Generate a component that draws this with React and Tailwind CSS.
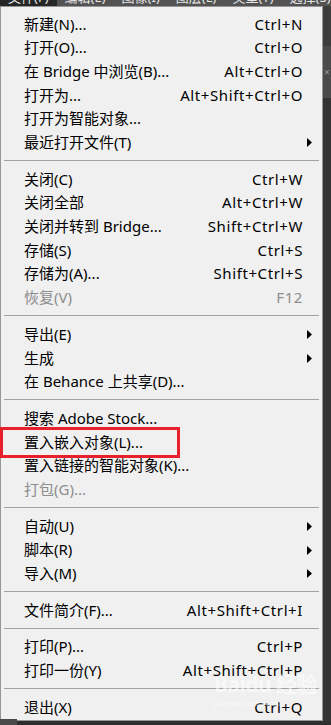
import React from 'react';

const groups = [
    [
        { label: '新建(N)...', key: 'Ctrl+N' },
        { label: '打开(O)...', key: 'Ctrl+O' },
        { label: '在 Bridge 中浏览(B)...', key: 'Alt+Ctrl+O' },
        { label: '打开为...', key: 'Alt+Shift+Ctrl+O' },
        { label: '打开为智能对象...' },
        { label: '最近打开文件(T)', sub: true },
    ],
    [
        { label: '关闭(C)', key: 'Ctrl+W' },
        { label: '关闭全部', key: 'Alt+Ctrl+W' },
        { label: '关闭并转到 Bridge...', key: 'Shift+Ctrl+W' },
        { label: '存储(S)', key: 'Ctrl+S' },
        { label: '存储为(A)...', key: 'Shift+Ctrl+S' },
        { label: '恢复(V)', key: 'F12', disabled: true },
    ],
    [
        { label: '导出(E)', sub: true },
        { label: '生成', sub: true },
        { label: '在 Behance 上共享(D)...' },
    ],
    [
        { label: '搜索 Adobe Stock...' },
        { label: '置入嵌入对象(L)...', marked: true },
        { label: '置入链接的智能对象(K)...' },
        { label: '打包(G)...', disabled: true },
    ],
    [
        { label: '自动(U)', sub: true },
        { label: '脚本(R)', sub: true },
        { label: '导入(M)', sub: true },
    ],
    [{ label: '文件简介(F)...', key: 'Alt+Shift+Ctrl+I' }],
    [
        { label: '打印(P)...', key: 'Ctrl+P' },
        { label: '打印一份(Y)', key: 'Alt+Shift+Ctrl+P' },
    ],
    [{ label: '退出(X)', key: 'Ctrl+Q' }],
];

const menuBar = ['文件(F)', '编辑(E)', '图像(I)', '图层(L)', '类型(Y)', '选择(S)'];

function Arrow() {
    return (
        <svg width="5" height="9" viewBox="0 0 5 9" className="block">
            <path d="M0 0 L5 4.5 L0 9 Z" fill="#000" />
        </svg>
    );
}

function Row({ item }) {
    const color = item.disabled ? 'text-[#8d8d8d]' : 'text-[#000]';
    return (
        <div className={`relative h-[23.7px] flex items-center pl-[23px] pr-[19px] ${color}`}>
            <span className="flex-1 whitespace-nowrap">{item.label}</span>
            {item.key && <span className="whitespace-nowrap tracking-[0.6px]">{item.key}</span>}
            {item.sub && (
                <span className="absolute right-[10px] top-[8px]">
                    <Arrow />
                </span>
            )}
            {/* red annotation box */}
            {item.marked && (
                <div className="absolute left-[-1px] top-[-3px] w-[180px] h-[31px] border-[3px] border-[#e8202b]" />
            )}
        </div>
    );
}

export default function App() {
    return (
        <div className="w-[331px] h-[725px] overflow-hidden bg-[#2e2e2e] relative font-['Noto_Sans','Noto_Sans_CJK_SC',sans-serif] text-[15px]">
            {/* menu bar, cut off at the top */}
            <div className="h-[6px] bg-[#535353] flex overflow-hidden text-[13px] text-[#e6e6e6]">
                {menuBar.map((m, i) => (
                    <div
                        key={m}
                        className={`px-[8px] leading-[18px] mt-[-12px] whitespace-nowrap ${i === 0 ? 'bg-[#262626]' : ''}`}
                    >
                        {m}
                    </div>
                ))}
            </div>

            <div className="flex">
                {/* dropdown */}
                <div className="w-[323px] bg-[#f0f0f0] border border-[#979797] pt-[5px] pb-[1px]">
                    {groups.map((g, gi) => (
                        <div key={gi}>
                            {gi > 0 && (
                                <div className="h-[13px] flex items-center px-[3px]">
                                    <div className="h-px w-full bg-[#a0a0a0]" />
                                </div>
                            )}
                            {g.map((item) => (
                                <Row key={item.label} item={item} />
                            ))}
                        </div>
                    ))}
                </div>

                {/* panel behind the menu */}
                <div className="flex-1 flex flex-col">
                    <div className="h-[40px] bg-[#3c3c3c]" />
                    <div className="h-[52px] bg-[#4a4a4a] flex items-center pl-[1px] text-[10px] text-[#9a9a9a]">×</div>
                    <div className="flex-1 bg-[#333333]" />
                </div>
            </div>

            {/* watermark */}
            <div className="absolute left-[214px] top-[674px] text-white/60 leading-none select-none whitespace-nowrap">
                <div className="text-[21px] font-bold tracking-tight">Baidu 经验</div>
                <div className="text-[9px] mt-[4px] font-['Liberation_Serif',serif]">jingyan.baidu.com</div>
            </div>

            <div className="absolute left-0 top-[719px] w-[17px] h-[6px] bg-[#4a4a4a]" />
        </div>
    );
}
